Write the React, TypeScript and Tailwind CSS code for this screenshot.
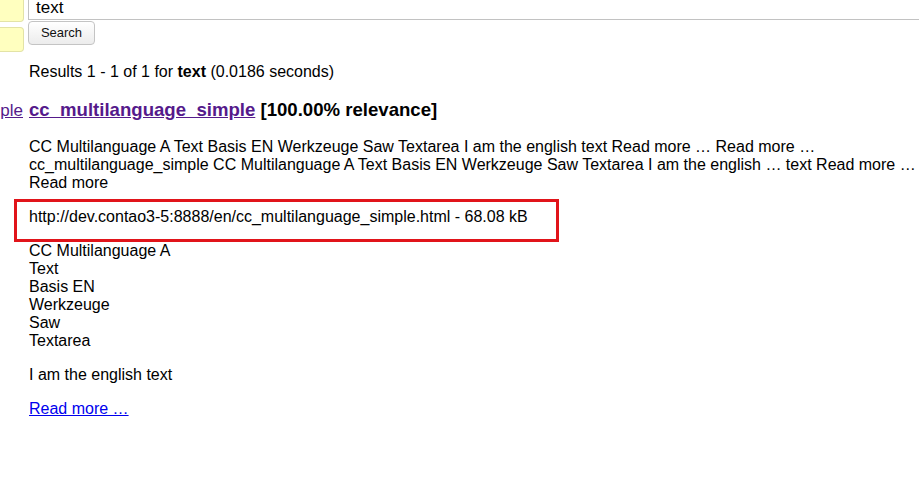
const paragraph = [
  "CC Multilanguage A Text Basis EN Werkzeuge Saw Textarea I am the english text Read more … Read more …",
  "cc_multilanguage_simple CC Multilanguage A Text Basis EN Werkzeuge Saw Textarea I am the english … text Read more …",
  "Read more",
];

const lines = ["CC Multilanguage A", "Text", "Basis EN", "Werkzeuge", "Saw", "Textarea"];

export default function App() {
  return (
    <div className="relative min-h-[485px] w-[919px] overflow-hidden bg-white font-['Liberation_Sans',Arial,sans-serif] text-[16px] leading-[18px] text-black">
      {/* search form, page is scrolled a few pixels */}
      <div className="-mt-[5px] flex gap-[4px]">
        <div className="flex w-[24px] flex-col gap-[5px]">
          <div className="h-[27px] rounded-r-[4px] border border-l-0 border-[#e3e3a6] bg-[#ffffbf]" />
          <div className="h-[25px] rounded-[4px] rounded-l-none border border-l-0 border-[#e3e3a6] bg-[#ffffbf]" />
        </div>
        <div className="flex flex-1 flex-col">
          <div className="-mr-[10px] flex h-[25px] items-center border border-[#c2c2c2] bg-white pl-[7px] pt-[1px] text-[17px]">
            text
          </div>
          <button className="mt-[1px] h-[24px] w-[67px] rounded-[4px] border border-[#c4c4c4] bg-gradient-to-b from-white to-[#ececec] text-[13px] text-[#111]">
            Search
          </button>
        </div>
      </div>

      <div className="pl-[29px]">
        <p className="mt-[11px] h-[18px]">
          Results 1 - 1 of 1 for <strong>text</strong> (0.0186 seconds)
        </p>

        <h3 className="relative mt-[18px] h-[21px] text-[18.6px] leading-[21px] font-bold">
          <a className="absolute -left-[29px] top-[1px] w-[23px] overflow-hidden whitespace-nowrap text-right text-[17px] font-normal text-[#551a8b] underline">
            ple
          </a>
          <a className="text-[#551a8b] underline">cc_multilanguage_simple</a> [100.00% relevance]
        </h3>

        <div className="mt-[18px]">
          {paragraph.map((l) => (
            <p key={l} className="whitespace-nowrap">
              {l}
            </p>
          ))}
        </div>

        <p className="mt-[16px]">http://dev.contao3-5:8888/en/cc_multilanguage_simple.html - 68.08 kB</p>

        <div className="mt-[16px]">
          {lines.map((l) => (
            <p key={l}>{l}</p>
          ))}
        </div>

        <p className="mt-[16px]">I am the english text</p>

        <p className="mt-[16px]">
          <a className="text-[#0000ee] underline">Read more …</a>
        </p>
      </div>

      {/* highlight frame around the url */}
      <div className="absolute left-[14px] top-[199px] h-[43px] w-[545px] border-[3px] border-[#e1141a]" />
    </div>
  );
}
